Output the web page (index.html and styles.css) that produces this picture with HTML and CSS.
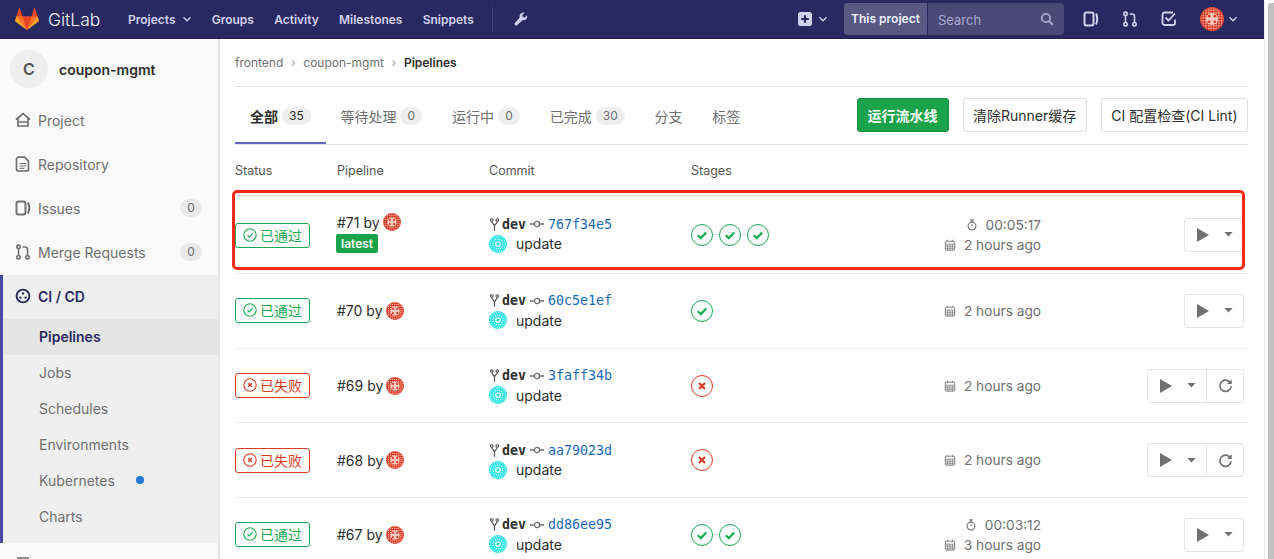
FILE: index.html
```html
<!DOCTYPE html>
<html lang="en">
<head>
    <meta charset="UTF-8">
    <meta name="viewport" content="width=device-width, initial-scale=1.0">
    <title>Pipelines · coupon-mgmt</title>
    <link rel="stylesheet" href="styles.css">
</head>
<body>
    <svg class="defs" width="0" height="0">
        <defs>
            <pattern id="speck" width="2.6" height="2.6" patternUnits="userSpaceOnUse">
                <rect width="1.3" height="1.3" fill="#fff"/>
            </pattern>
            <symbol id="i-chevron" viewBox="0 0 10 10"><path d="M1.5 3.2 5 6.8l3.5-3.6" fill="none" stroke="currentColor" stroke-width="1.3"/></symbol>
            <symbol id="i-issues" viewBox="0 0 16 16"><rect x="1.5" y="1.5" width="9" height="13" rx="2" fill="none" stroke="currentColor" stroke-width="2"/><path d="M13 2.5c1.6 3 1.6 8 0 11" fill="none" stroke="currentColor" stroke-width="2"/></symbol>
            <symbol id="i-mr" viewBox="0 0 16 16"><g fill="none" stroke="currentColor" stroke-width="1.6"><circle cx="3.5" cy="2.8" r="1.7"/><circle cx="3.5" cy="13.2" r="1.7"/><circle cx="12.5" cy="13.2" r="1.7"/><path d="M3.5 4.5v7M12.5 11.5V5.5c0-1.5-1-2.5-2.5-2.5H7.5"/></g></symbol>
            <symbol id="i-play" viewBox="0 0 12 14"><path d="M0 0l12 7-12 7z" fill="currentColor"/></symbol>
            <symbol id="i-caret" viewBox="0 0 10 6"><path d="M0 0h10L5 5.5z" fill="currentColor"/></symbol>
            <symbol id="i-retry" viewBox="0 0 16 16"><path d="M13.2 5.2A6 6 0 1 0 14 9" fill="none" stroke="currentColor" stroke-width="1.8"/><path d="M14.6 1.4v5h-5z" fill="currentColor"/></symbol>
            <symbol id="i-branch" viewBox="0 0 10 14"><g fill="none" stroke="currentColor" stroke-width="1.3"><circle cx="2" cy="2" r="1.4"/><circle cx="8" cy="2" r="1.4"/><path d="M2 3.4c0 3 3 3 3 5.6v5M8 3.4C8 6.4 5 6.4 5 9"/></g></symbol>
            <symbol id="i-commit" viewBox="0 0 14 8"><circle cx="7" cy="4" r="2.6" fill="none" stroke="currentColor" stroke-width="1.3"/><path d="M0 4h4.2M9.8 4H14" stroke="currentColor" stroke-width="1.3"/></symbol>
            <symbol id="i-timer" viewBox="0 0 14 14"><g fill="none" stroke="currentColor" stroke-width="1.3"><circle cx="7" cy="8.3" r="4.6"/><path d="M5 1h4M7 1v2.5M7 6v2.5"/></g></symbol>
            <symbol id="i-calendar" viewBox="0 0 14 14"><g fill="none" stroke="currentColor"><rect x="1.5" y="2.5" width="11" height="10.5" rx="1"/><path d="M4 .8v2.6M10 .8v2.6M1.5 6h11M1.5 8.4h11M1.5 10.8h11M4.2 6v7M7 6v7M9.8 6v7" stroke-width=".8"/></g></symbol>
            <symbol id="i-check-sm" viewBox="0 0 14 14"><circle cx="7" cy="7" r="6.2" fill="none" stroke="currentColor" stroke-width="1.1"/><path d="M4.5 7.2l1.8 1.8 3.3-3.6" fill="none" stroke="currentColor" stroke-width="1.2"/></symbol>
            <symbol id="i-cross-sm" viewBox="0 0 14 14"><circle cx="7" cy="7" r="6.2" fill="none" stroke="currentColor" stroke-width="1.1"/><path d="M5.2 5.2l3.6 3.6m0-3.6L5.2 8.8" fill="none" stroke="currentColor" stroke-width="1.5"/></symbol>
            <symbol id="i-stage-ok" viewBox="0 0 22 22"><circle cx="11" cy="11" r="10.5" fill="#fff" stroke="currentColor"/><path d="M6.8 11.3l3 2.8 5.4-5.6" fill="none" stroke="currentColor" stroke-width="2.2"/></symbol>
            <symbol id="i-stage-fail" viewBox="0 0 22 22"><circle cx="11" cy="11" r="10.5" fill="#fff" stroke="currentColor"/><path d="M8 8l6 6m0-6l-6 6" fill="none" stroke="currentColor" stroke-width="2.2"/></symbol>
            <symbol id="avatar-red" viewBox="0 0 24 24">
                <circle cx="12" cy="12" r="12" fill="#df3d27"/>
                <circle cx="12" cy="12" r="11.4" fill="url(#speck)" fill-opacity=".75"/>
                <circle cx="12" cy="12" r="6" fill="#f6c9c0"/>
                <g fill="#df3d27">
                    <circle cx="9.2" cy="9.2" r="1.4"/><circle cx="14.8" cy="9.2" r="1.4"/><circle cx="9.2" cy="14.8" r="1.4"/><circle cx="14.8" cy="14.8" r="1.4"/>
                </g>
            </symbol>
            <symbol id="avatar-cyan" viewBox="0 0 24 24">
                <circle cx="12" cy="12" r="12" fill="#27e4e6"/>
                <g fill="none" stroke="#fff">
                    <circle cx="12" cy="12" r="9.8" stroke-width="1.2" stroke-dasharray="1.5 1.6"/>
                    <circle cx="12" cy="12" r="6.6" stroke-width="1.4" stroke-dasharray="1.5 1.4"/>
                    <circle cx="12" cy="12" r="3" stroke-width="1.6"/>
                </g>
            </symbol>
        </defs>
    </svg>

    <div class="page">
        <header class="navbar">
            <a class="brand">
                <svg class="tanuki" viewBox="0 0 36 36">
                    <path fill="#e24329" d="M2 14l9.38 9v-9l-4-12.28c-.205-.632-1.176-.632-1.38 0z"/>
                    <path fill="#e24329" d="M34 14l-9.38 9v-9l4-12.28c.205-.632 1.176-.632 1.38 0z"/>
                    <path fill="#e24329" d="M18 34.38 3 14h30z"/>
                    <path fill="#fc6d26" d="M18 34.38 11.38 14H2l4 11z"/>
                    <path fill="#fc6d26" d="M18 34.38 24.62 14H34l-4 11z"/>
                    <path fill="#fca326" d="M2 14L.1 20.16c-.18.565 0 1.2.5 1.56l17.42 12.66z"/>
                    <path fill="#fca326" d="M34 14l1.9 6.16c.18.565 0 1.2-.5 1.56L18 34.38z"/>
                </svg>
                <span class="brand-name">GitLab</span>
            </a>
            <nav class="nav-links">
                <a class="nav-link">Projects <svg class="chev"><use href="#i-chevron"/></svg></a>
                <a class="nav-link">Groups</a>
                <a class="nav-link">Activity</a>
                <a class="nav-link">Milestones</a>
                <a class="nav-link">Snippets</a>
            </nav>
            <span class="nav-divider"></span>
            <svg class="wrench" viewBox="0 0 16 16"><path d="M14.8 3.6l-2.6 2.6-2.2-.6-.6-2.2L12 .8A4.4 4.4 0 0 0 6.6 6.4L1 12.6a1.7 1.7 0 0 0 2.4 2.4l6.2-5.6a4.4 4.4 0 0 0 5.2-5.8z" fill="#d1d1f0"/></svg>

            <div class="nav-right">
                <a class="nav-new">
                    <svg class="plus-box" viewBox="0 0 14 14"><rect width="14" height="14" rx="2.5" fill="#d1d1f0"/><path d="M7 3.2v7.6M3.2 7h7.6" stroke="#292961" stroke-width="2.2"/></svg>
                    <svg class="chev"><use href="#i-chevron"/></svg>
                </a>
                <div class="search">
                    <span class="search-scope">This project</span>
                    <span class="search-field">
                        <span class="search-text">Search</span>
                        <svg class="search-icon" viewBox="0 0 14 14"><circle cx="6" cy="6" r="4.2" fill="none" stroke="currentColor" stroke-width="1.8"/><path d="M9.2 9.2l3.6 3.6" stroke="currentColor" stroke-width="2"/></svg>
                    </span>
                </div>
                <svg class="nav-icon"><use href="#i-issues"/></svg>
                <svg class="nav-icon"><use href="#i-mr"/></svg>
                <svg class="nav-icon" viewBox="0 0 16 16"><path d="M14 8.5V12a2 2 0 0 1-2 2H3.5a2 2 0 0 1-2-2V3.5a2 2 0 0 1 2-2H12" fill="none" stroke="currentColor" stroke-width="1.8"/><path d="M4.5 6.5l3 3 6.5-7" fill="none" stroke="currentColor" stroke-width="1.8"/></svg>
                <a class="nav-user">
                    <svg class="nav-avatar"><use href="#avatar-red"/></svg>
                    <svg class="chev"><use href="#i-chevron"/></svg>
                </a>
            </div>
        </header>

        <div class="layout">
            <aside class="sidebar">
                <div class="project">
                    <span class="project-avatar">C</span>
                    <span class="project-name">coupon-mgmt</span>
                </div>
                <ul class="side-nav">
                    <li class="side-item">
                        <svg class="side-icon" viewBox="0 0 16 16"><path d="M1 7.5L8 1.5l7 6M3 6.5V14h10V6.5M3 10h10" fill="none" stroke="currentColor" stroke-width="1.7"/></svg>
                        Project
                    </li>
                    <li class="side-item">
                        <svg class="side-icon" viewBox="0 0 16 16"><path d="M3 1.2h6.5l4 4V13a2 2 0 0 1-2 2h-8a2 2 0 0 1-2-2V3a2 2 0 0 1 1.5-1.8z" fill="none" stroke="currentColor" stroke-width="1.7"/><path d="M4.5 7.5h7M4.5 10h7M4.5 12.3h5" stroke="currentColor"/></svg>
                        Repository
                    </li>
                    <li class="side-item">
                        <svg class="side-icon"><use href="#i-issues"/></svg>
                        Issues
                        <span class="side-count">0</span>
                    </li>
                    <li class="side-item">
                        <svg class="side-icon"><use href="#i-mr"/></svg>
                        Merge Requests
                        <span class="side-count">0</span>
                    </li>
                    <li class="side-group">
                        <div class="side-item side-item-active">
                            <svg class="side-icon" viewBox="0 0 16 16"><circle cx="8" cy="8" r="6.4" fill="none" stroke="currentColor" stroke-width="1.9"/><circle cx="8" cy="5.4" r="1.2" fill="currentColor"/><circle cx="5.4" cy="9.6" r="1.2" fill="currentColor"/><circle cx="10.6" cy="9.6" r="1.2" fill="currentColor"/></svg>
                            CI / CD
                        </div>
                        <a class="side-sub side-sub-active">Pipelines</a>
                        <a class="side-sub">Jobs</a>
                        <a class="side-sub">Schedules</a>
                        <a class="side-sub">Environments</a>
                        <a class="side-sub">Kubernetes <span class="side-dot"></span></a>
                        <a class="side-sub">Charts</a>
                    </li>
                    <li class="side-item side-item-next">
                        <svg class="side-icon" viewBox="0 0 16 16"><path d="M3 2h10v12H3z" fill="none" stroke="currentColor" stroke-width="1.7"/></svg>
                    </li>
                </ul>
            </aside>

            <main class="content">
                <div class="breadcrumbs">
                    <a>frontend</a><span class="crumb-sep">›</span><a>coupon-mgmt</a><span class="crumb-sep">›</span><strong>Pipelines</strong>
                </div>

                <div class="top-bar">
                    <ul class="tabs">
                        <li class="tab tab-active">全部 <span class="tab-count">35</span></li>
                        <li class="tab">等待处理 <span class="tab-count">0</span></li>
                        <li class="tab">运行中 <span class="tab-count">0</span></li>
                        <li class="tab">已完成 <span class="tab-count">30</span></li>
                        <li class="tab">分支</li>
                        <li class="tab">标签</li>
                    </ul>
                    <div class="top-actions">
                        <button class="btn btn-green">运行流水线</button>
                        <button class="btn btn-tight">清除Runner缓存</button>
                        <button class="btn btn-tight">CI 配置检查(CI Lint)</button>
                    </div>
                </div>

                <div class="table-head">
                    <span>Status</span>
                    <span>Pipeline</span>
                    <span>Commit</span>
                    <span>Stages</span>
                </div>

                <div class="rows">
                    <div class="marker"></div>

                    <div class="row row-71">
                        <div><span class="status status-ok"><svg class="status-icon"><use href="#i-check-sm"/></svg>已通过</span></div>
                        <div class="pipeline">
                            <div class="pipeline-id">#71 by <svg class="avatar-sm"><use href="#avatar-red"/></svg></div>
                            <span class="tag-latest">latest</span>
                        </div>
                        <div class="commit">
                            <div class="commit-ref"><svg class="branch-icon"><use href="#i-branch"/></svg><b>dev</b><svg class="commit-icon"><use href="#i-commit"/></svg><a class="sha">767f34e5</a></div>
                            <div class="commit-msg"><svg class="avatar-commit"><use href="#avatar-cyan"/></svg>update</div>
                        </div>
                        <div class="stages">
                            <svg class="stage stage-ok"><use href="#i-stage-ok"/></svg><i class="stage-link"></i><svg class="stage stage-ok"><use href="#i-stage-ok"/></svg><i class="stage-link"></i><svg class="stage stage-ok"><use href="#i-stage-ok"/></svg>
                        </div>
                        <div class="times">
                            <div><svg class="time-icon"><use href="#i-timer"/></svg>00:05:17</div>
                            <div><svg class="time-icon"><use href="#i-calendar"/></svg>2 hours ago</div>
                        </div>
                        <div class="actions">
                            <span class="action-group">
                                <span class="action-play"><svg class="play"><use href="#i-play"/></svg><svg class="caret"><use href="#i-caret"/></svg></span>
                            </span>
                        </div>
                    </div>

                    <div class="row">
                        <div><span class="status status-ok"><svg class="status-icon"><use href="#i-check-sm"/></svg>已通过</span></div>
                        <div class="pipeline">
                            <div class="pipeline-id">#70 by <svg class="avatar-sm"><use href="#avatar-red"/></svg></div>
                        </div>
                        <div class="commit">
                            <div class="commit-ref"><svg class="branch-icon"><use href="#i-branch"/></svg><b>dev</b><svg class="commit-icon"><use href="#i-commit"/></svg><a class="sha">60c5e1ef</a></div>
                            <div class="commit-msg"><svg class="avatar-commit"><use href="#avatar-cyan"/></svg>update</div>
                        </div>
                        <div class="stages">
                            <svg class="stage stage-ok"><use href="#i-stage-ok"/></svg>
                        </div>
                        <div class="times">
                            <div><svg class="time-icon"><use href="#i-calendar"/></svg>2 hours ago</div>
                        </div>
                        <div class="actions">
                            <span class="action-group">
                                <span class="action-play"><svg class="play"><use href="#i-play"/></svg><svg class="caret"><use href="#i-caret"/></svg></span>
                            </span>
                        </div>
                    </div>

                    <div class="row">
                        <div><span class="status status-fail"><svg class="status-icon"><use href="#i-cross-sm"/></svg>已失败</span></div>
                        <div class="pipeline">
                            <div class="pipeline-id">#69 by <svg class="avatar-sm"><use href="#avatar-red"/></svg></div>
                        </div>
                        <div class="commit">
                            <div class="commit-ref"><svg class="branch-icon"><use href="#i-branch"/></svg><b>dev</b><svg class="commit-icon"><use href="#i-commit"/></svg><a class="sha">3faff34b</a></div>
                            <div class="commit-msg"><svg class="avatar-commit"><use href="#avatar-cyan"/></svg>update</div>
                        </div>
                        <div class="stages">
                            <svg class="stage stage-fail"><use href="#i-stage-fail"/></svg>
                        </div>
                        <div class="times">
                            <div><svg class="time-icon"><use href="#i-calendar"/></svg>2 hours ago</div>
                        </div>
                        <div class="actions">
                            <span class="action-group">
                                <span class="action-play"><svg class="play"><use href="#i-play"/></svg><svg class="caret"><use href="#i-caret"/></svg></span>
                                <span class="action-retry"><svg class="retry"><use href="#i-retry"/></svg></span>
                            </span>
                        </div>
                    </div>

                    <div class="row">
                        <div><span class="status status-fail"><svg class="status-icon"><use href="#i-cross-sm"/></svg>已失败</span></div>
                        <div class="pipeline">
                            <div class="pipeline-id">#68 by <svg class="avatar-sm"><use href="#avatar-red"/></svg></div>
                        </div>
                        <div class="commit">
                            <div class="commit-ref"><svg class="branch-icon"><use href="#i-branch"/></svg><b>dev</b><svg class="commit-icon"><use href="#i-commit"/></svg><a class="sha">aa79023d</a></div>
                            <div class="commit-msg"><svg class="avatar-commit"><use href="#avatar-cyan"/></svg>update</div>
                        </div>
                        <div class="stages">
                            <svg class="stage stage-fail"><use href="#i-stage-fail"/></svg>
                        </div>
                        <div class="times">
                            <div><svg class="time-icon"><use href="#i-calendar"/></svg>2 hours ago</div>
                        </div>
                        <div class="actions">
                            <span class="action-group">
                                <span class="action-play"><svg class="play"><use href="#i-play"/></svg><svg class="caret"><use href="#i-caret"/></svg></span>
                                <span class="action-retry"><svg class="retry"><use href="#i-retry"/></svg></span>
                            </span>
                        </div>
                    </div>

                    <div class="row">
                        <div><span class="status status-ok"><svg class="status-icon"><use href="#i-check-sm"/></svg>已通过</span></div>
                        <div class="pipeline">
                            <div class="pipeline-id">#67 by <svg class="avatar-sm"><use href="#avatar-red"/></svg></div>
                        </div>
                        <div class="commit">
                            <div class="commit-ref"><svg class="branch-icon"><use href="#i-branch"/></svg><b>dev</b><svg class="commit-icon"><use href="#i-commit"/></svg><a class="sha">dd86ee95</a></div>
                            <div class="commit-msg"><svg class="avatar-commit"><use href="#avatar-cyan"/></svg>update</div>
                        </div>
                        <div class="stages">
                            <svg class="stage stage-ok"><use href="#i-stage-ok"/></svg><i class="stage-link"></i><svg class="stage stage-ok"><use href="#i-stage-ok"/></svg>
                        </div>
                        <div class="times">
                            <div><svg class="time-icon"><use href="#i-timer"/></svg>00:03:12</div>
                            <div><svg class="time-icon"><use href="#i-calendar"/></svg>3 hours ago</div>
                        </div>
                        <div class="actions">
                            <span class="action-group">
                                <span class="action-play"><svg class="play"><use href="#i-play"/></svg><svg class="caret"><use href="#i-caret"/></svg></span>
                            </span>
                        </div>
                    </div>
                </div>
            </main>
        </div>
    </div>

    <div class="scrollbar"><div class="scrollbar-thumb"></div></div>
</body>
</html>
```

FILE: styles.css
```css
* {
    box-sizing: border-box;
}
html, body {
    height: 559px;
    margin: 0;
    overflow: hidden;
}
body {
    display: flex;
    font-family: Inter, "Noto Sans CJK SC", sans-serif;
    font-size: 14px;
    color: #2e2e2e;
    background: #fff;
}
ul {
    list-style: none;
    margin: 0;
    padding: 0;
}
.defs {
    position: absolute;
}
.page {
    flex: 1;
    min-width: 0;
    display: flex;
    flex-direction: column;
}

/* scrollbar */
.scrollbar {
    width: 10px;
    border-left: 1px solid #ededed;
    padding: 3px 0 0 3px;
    background: #fafafa;
}
.scrollbar-thumb {
    height: 100%;
    background: #c1c1c1;
    border-radius: 3px 0 0 0;
}

/* top navbar */
.navbar {
    height: 39px;
    flex: none;
    display: flex;
    align-items: center;
    background: #292961;
    color: #d1d1f0;
    border-bottom: 1px solid #1f1f4d;
}
.brand {
    display: flex;
    align-items: center;
    margin-left: 15px;
    width: 113px;
}
.tanuki {
    width: 24px;
    height: 24px;
}
.brand-name {
    margin-left: 9px;
    font-size: 17.5px;
    font-weight: 300;
    color: #f0f0fa;
}
.nav-links {
    display: flex;
    gap: 20.2px;
}
.nav-link {
    font-size: 12px;
    font-weight: 600;
    display: flex;
    align-items: center;
    gap: 6px;
}
.chev {
    width: 10px;
    height: 10px;
}
.nav-divider {
    width: 1px;
    height: 24px;
    margin-left: 18px;
    background: #43437a;
}
.wrench {
    width: 14px;
    height: 16px;
    margin-left: 21px;
}
.nav-right {
    margin-left: auto;
    display: flex;
    align-items: center;
}
.nav-new {
    display: flex;
    align-items: center;
    gap: 6px;
    margin-right: 16px;
}
.plus-box {
    width: 14px;
    height: 14px;
}
.search {
    display: flex;
    width: 220px;
    height: 32px;
    margin-right: 19px;
    border-radius: 4px;
    overflow: hidden;
    font-size: 13px;
}
.search-scope {
    width: 84px;
    background: #585882;
    color: #f0f0fa;
    font-size: 12px;
    font-weight: 600;
    line-height: 32px;
    text-align: center;
    border-right: 1px solid #292961;
}
.search-field {
    flex: 1;
    display: flex;
    align-items: center;
    justify-content: space-between;
    padding: 0 10px 0 10px;
    background: #4a4a76;
    color: #a9a9cf;
}
.search-text {
    padding-top: 2px;
}
.search-icon {
    width: 14px;
    height: 14px;
}
.nav-icon {
    width: 16px;
    height: 16px;
    margin-right: 23px;
    color: #d1d1f0;
}
.nav-user {
    display: flex;
    align-items: center;
    gap: 4px;
    margin-right: 26px;
}
.nav-avatar {
    width: 24px;
    height: 24px;
}

/* main area */
.layout {
    flex: 1;
    min-height: 0;
    display: flex;
}
.sidebar {
    width: 220px;
    flex: none;
    background: #fafafa;
    border-right: 2px solid #e5e5e5;
    overflow: hidden;
}
.project {
    height: 60px;
    display: flex;
    align-items: center;
    padding-left: 10px;
}
.project-avatar {
    width: 38px;
    height: 38px;
    border-radius: 50%;
    background: #eee;
    color: #555;
    font-size: 16px;
    font-weight: 600;
    line-height: 38px;
    text-align: center;
}
.project-name {
    margin-left: 11px;
    font-size: 14px;
    font-weight: 600;
    color: #2e2e2e;
}
.side-item {
    height: 44px;
    display: flex;
    align-items: center;
    padding: 0 0 2px 15px;
    color: #707070;
    font-size: 14px;
}
.side-icon {
    width: 16px;
    height: 16px;
    margin-right: 7px;
    color: #707070;
}
.side-count {
    margin-left: auto;
    margin-right: 16px;
    width: 22px;
    height: 18px;
    border-radius: 9px;
    background: #e8e8e8;
    color: #707070;
    font-size: 12px;
    line-height: 18px;
    text-align: center;
}
.side-group {
    background: #efefef;
    border-left: 3px solid #4b4ba3;
    height: 268px;
}
.side-item-active {
    padding-left: 12px;
    color: #292961;
    font-weight: 600;
}
.side-item-active .side-icon {
    color: #292961;
}
.side-sub {
    display: flex;
    align-items: center;
    height: 36px;
    padding: 0 0 2px 36px;
    color: #707070;
    font-size: 14px;
}
.side-sub-active {
    background: #e5e5e5;
    color: #292961;
    font-weight: 600;
}
.side-dot {
    width: 8px;
    height: 8px;
    margin-left: 21px;
    border-radius: 50%;
    background: #1f78d1;
}

.content {
    flex: 1;
    min-width: 0;
    padding: 0 16px 0 15px;
}
.breadcrumbs {
    height: 48px;
    display: flex;
    align-items: center;
    border-bottom: 1px solid #e5e5e5;
    color: #707070;
    font-size: 12px;
}
.breadcrumbs strong {
    color: #2e2e2e;
    font-weight: 600;
}
.crumb-sep {
    margin: 0 7.7px;
    color: #999;
}

/* tabs + buttons */
.top-bar {
    height: 58px;
    display: flex;
    justify-content: space-between;
    border-bottom: 1px solid #e5e5e5;
}
.tabs {
    display: flex;
}
.tab {
    height: 57px;
    padding: 3px 14.85px 0;
    display: flex;
    align-items: center;
    gap: 4px;
    color: #707070;
    font-size: 14px;
    border-bottom: 2px solid transparent;
}
.tab-active {
    padding-left: 15px;
    color: #2e2e2e;
    font-weight: 600;
    border-bottom-color: #6666c4;
}
.tab-count {
    min-width: 22px;
    height: 18px;
    padding: 0 7px;
    border-radius: 9px;
    background: #eee;
    color: #707070;
    font-size: 12px;
    font-weight: 400;
    line-height: 18px;
    text-align: center;
}
.tab-active .tab-count {
    color: #2e2e2e;
}
.top-actions {
    display: flex;
    gap: 14px;
    padding-top: 11px;
}
.btn {
    height: 34px;
    padding: 0 10px;
    border: 1px solid #dfdfdf;
    border-radius: 3px;
    background: #fff;
    color: #2e2e2e;
    font-family: inherit;
    font-size: 14px;
}
.btn-tight {
    padding: 0 9.5px;
}
.btn-green {
    background: #1aa34a;
    border-color: #168f41;
    color: #fff;
    font-weight: 600;
}

/* table */
.table-head, .row {
    display: grid;
    grid-template-columns: 102px 152px 202px 196px 154px 1fr;
    align-items: center;
}
.table-head {
    height: 51px;
    color: #555;
    font-size: 12.5px;
    border-bottom: 1px solid #e5e5e5;
}
.rows {
    position: relative;
}
/* the red hand-drawn annotation box over the first row */
.marker {
    position: absolute;
    left: -3px;
    right: 3px;
    top: -6px;
    height: 80px;
    border: 3px solid #f8281a;
    border-radius: 5px;
    z-index: 2;
    pointer-events: none;
}
.row {
    height: 74.7px;
    border-bottom: 1px solid #eaeaea;
}
.row-71 {
    height: 78px;
}
.row-71 .status {
    margin-top: 1px;
}
.row-71 .pipeline {
    margin-bottom: 3px;
}
.row-71 .commit {
    margin-bottom: 1px;
}
.status {
    display: inline-flex;
    align-items: center;
    gap: 3px;
    width: 75px;
    height: 25px;
    padding: 0 0 1px 7px;
    border: 1px solid;
    border-radius: 3px;
    font-size: 14px;
}
.status-ok {
    color: #1aaa55;
}
.status-fail {
    color: #db3b21;
}
.status-icon {
    width: 14px;
    height: 14px;
}
.pipeline-id {
    display: flex;
    align-items: center;
    gap: 3px;
    font-size: 14px;
}
.avatar-sm {
    width: 18px;
    height: 18px;
}
.tag-latest {
    display: inline-block;
    height: 19px;
    margin: 3px 0 0 -1px;
    padding: 0 5px;
    border-radius: 2px;
    background: #1aa34a;
    color: #fff;
    font-size: 12px;
    font-weight: 600;
    line-height: 19px;
}
.commit-ref {
    display: flex;
    align-items: center;
    height: 20px;
    font-family: "DejaVu Sans Mono", monospace;
    font-size: 13.3px;
}
.commit-ref b {
    margin-left: 3px;
}
.branch-icon {
    width: 9px;
    height: 13px;
    margin-left: 1px;
    color: #555;
}
.commit-icon {
    width: 14px;
    height: 8px;
    margin: 0 4px;
    color: #707070;
}
.sha {
    color: #1b69b6;
}
.commit-msg {
    display: flex;
    align-items: center;
    height: 20px;
    padding-bottom: 1px;
    font-size: 14px;
}
.avatar-commit {
    width: 18px;
    height: 18px;
    margin-right: 9px;
}
.stages {
    display: flex;
    align-items: center;
}
.stage {
    width: 22px;
    height: 22px;
}
.stage-ok {
    color: #1aaa55;
}
.stage-fail {
    color: #db3b21;
}
.stage-link {
    width: 6px;
    height: 1px;
    background: #ddd;
}
.times {
    color: #707070;
    font-size: 13.7px;
    line-height: 20px;
}
.times div {
    display: flex;
    align-items: center;
    justify-content: flex-end;
}
.time-icon {
    width: 12px;
    height: 12px;
    margin-right: 8px;
}
.actions {
    display: flex;
    justify-content: flex-end;
    padding-right: 4px;
}
.action-group {
    display: flex;
    height: 34px;
    border: 1px solid #e5e5e5;
    border-radius: 3px;
    color: #707070;
}
.action-play {
    width: 58px;
    display: flex;
    align-items: center;
    padding-left: 12px;
}
.play {
    width: 12px;
    height: 14px;
}
.caret {
    width: 9px;
    height: 5px;
    margin-left: 15px;
}
.action-retry {
    width: 37px;
    display: flex;
    align-items: center;
    justify-content: center;
    border-left: 1px solid #e5e5e5;
}
.retry {
    width: 15px;
    height: 15px;
}
```
